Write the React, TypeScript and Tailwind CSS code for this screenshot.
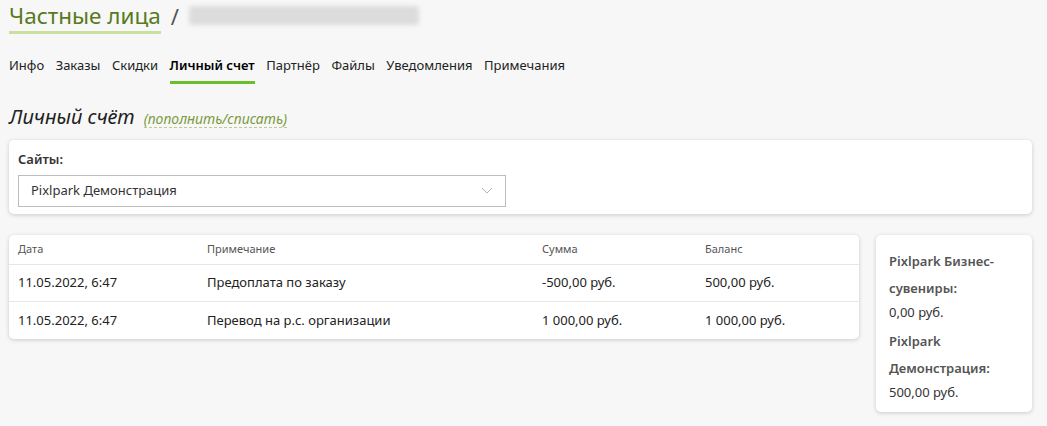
import React from 'react';

const tabs = ['Инфо', 'Заказы', 'Скидки', 'Личный счет', 'Партнёр', 'Файлы', 'Уведомления', 'Примечания'];

const rows = [
    { date: '11.05.2022, 6:47', note: 'Предоплата по заказу', sum: '-500,00 руб.', balance: '500,00 руб.' },
    { date: '11.05.2022, 6:47', note: 'Перевод на р.с. организации', sum: '1 000,00 руб.', balance: '1 000,00 руб.' },
];

const balances = [
    { site: 'Pixlpark Бизнес-сувениры:', value: '0,00 руб.' },
    { site: 'Pixlpark Демонстрация:', value: '500,00 руб.' },
];

const Header: React.FC = () => (
    <div className="flex items-center h-[34px] pt-[2px]">
        <h1 className="text-[22.5px] leading-[28px] text-[#587a1c] border-b-[3px] border-[#c8e0a0] pb-[1px]">
            Частные лица
        </h1>
        <span className="text-[22px] text-[#555] ml-[10px] -mt-[4px]">/</span>
        <div className="ml-[10px] -mt-[6px] w-[230px] h-[19px] bg-[#dcdcdc] blur-[2px] rounded-sm" />
    </div>
);

const Tabs: React.FC = () => (
    <nav className="flex gap-[11.5px] mt-[22px] text-[13px] text-[#222]">
        {tabs.map((t) =>
            t === 'Личный счет' ? (
                <span key={t} className="font-semibold text-black pb-[5px] border-b-[3px] border-[#6cbf2c]">
                    {t}
                </span>
            ) : (
                <span key={t} className="pb-[5px]">{t}</span>
            )
        )}
    </nav>
);

export default function App() {
    return (
        <div className="min-h-[426px] bg-[#f7f7f7] px-[9px] text-[#333]" style={{ fontFamily: '"Segoe UI", "Noto Sans", sans-serif' }}>
            <Header />
            <Tabs />

            <div className="flex items-baseline mt-[20px]">
                <h2 className="text-[20px] italic text-[#222] leading-[26px]">Личный счёт</h2>
                <a className="ml-[9px] text-[14px] italic text-[#7b9a40] border-b border-dashed border-[#b5cf8a] leading-[16px]">
                    (пополнить/списать)
                </a>
            </div>

            <div className="mt-[10px] mr-[6px] bg-white rounded-[5px] shadow-[0_1px_4px_rgba(0,0,0,0.18)] px-[9px] pt-[10px] pb-[7px]">
                <div className="text-[13px] font-semibold text-[#333] mb-[6px]">Сайты:</div>
                <div className="w-[488px] h-[32px] border border-[#bdbdbd] flex items-center justify-between px-[12px] text-[13px] text-[#333]">
                    <span>Pixlpark Демонстрация</span>
                    <svg width="12" height="8" viewBox="0 0 12 8" fill="none" stroke="#b5b5b5" strokeWidth="1">
                        <path d="M1 1l5 5 5-5" />
                    </svg>
                </div>
            </div>

            <div className="flex items-start gap-[17px] mt-[21px] mr-[6px]">
                <div className="w-[850px] bg-white rounded-[5px] shadow-[0_1px_4px_rgba(0,0,0,0.18)]">
                    <div className="grid grid-cols-[189px_335px_163px_1fr] h-[30px] items-center px-[9px] text-[11px] text-[#555] border-b border-[#e6e6e6]">
                        <span>Дата</span>
                        <span>Примечание</span>
                        <span>Сумма</span>
                        <span>Баланс</span>
                    </div>
                    {rows.map((r, i) => (
                        <div
                            key={i}
                            className={`grid grid-cols-[189px_335px_163px_1fr] h-[37px] items-center px-[9px] text-[13px] text-[#222] ${i === 0 ? 'border-b border-[#e6e6e6]' : ''}`}
                        >
                            <span>{r.date}</span>
                            <span>{r.note}</span>
                            <span>{r.sum}</span>
                            <span>{r.balance}</span>
                        </div>
                    ))}
                </div>

                <div className="flex-1 bg-white rounded-[5px] shadow-[0_1px_4px_rgba(0,0,0,0.18)] px-[13px] pt-[13px] pb-[10px] text-[13px]">
                    {balances.map((b) => (
                        <div key={b.site} className="mb-[6px] last:mb-0">
                            <div className="font-semibold text-[#555] leading-[27px]">{b.site}</div>
                            <div className="text-[#333] leading-[20px]">{b.value}</div>
                        </div>
                    ))}
                </div>
            </div>
        </div>
    );
}
